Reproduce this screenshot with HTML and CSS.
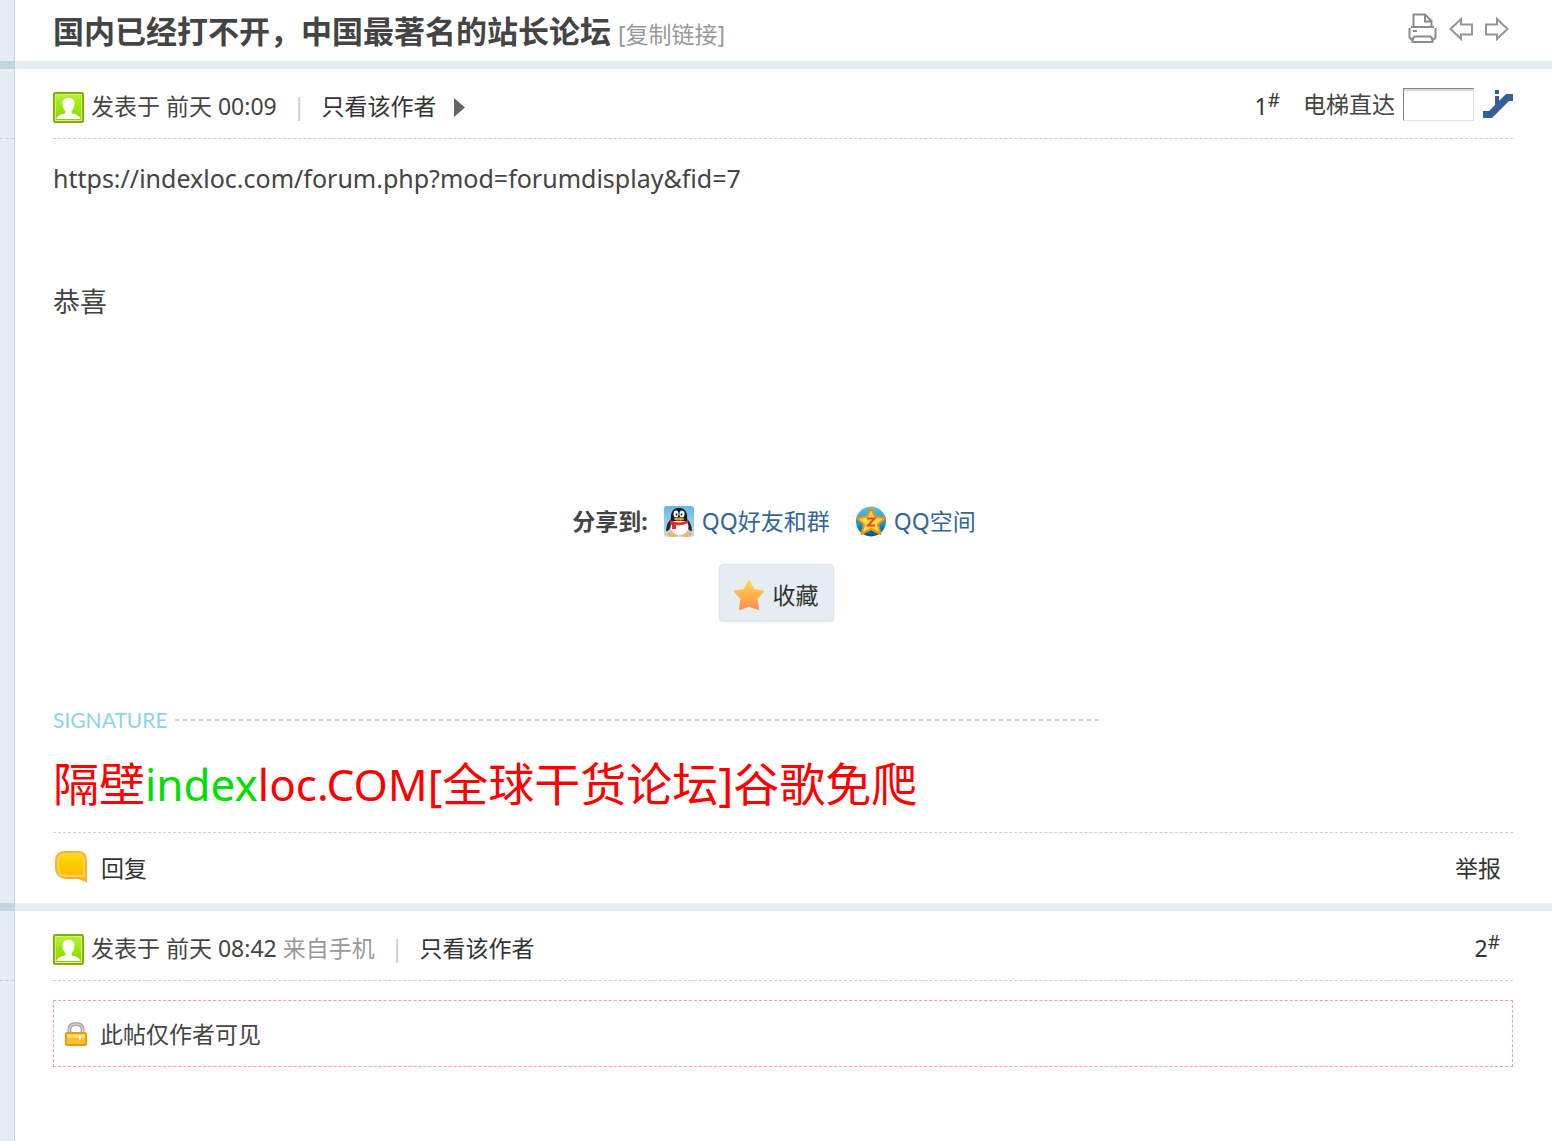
FILE: index.html
```
<!DOCTYPE html>
<html lang="zh-CN">
<head>
  <meta charset="utf-8">
  <title>国内已经打不开，中国最著名的站长论坛</title>
  <link rel="stylesheet" href="styles.css">
</head>
<body>
  <svg width="0" height="0" class="defs" aria-hidden="true">
    <defs>
      <linearGradient id="green" x1="0" y1="0" x2="0" y2="1"><stop offset="0" stop-color="#b9f03e"/><stop offset=".55" stop-color="#96e800"/><stop offset="1" stop-color="#8fc90c"/></linearGradient>
      <linearGradient id="orange" x1="0" y1="0" x2="0" y2="1"><stop offset="0" stop-color="#ffd84a"/><stop offset="1" stop-color="#ff8f52"/></linearGradient>
      <linearGradient id="yellow" x1="0" y1="0" x2="0" y2="1"><stop offset="0" stop-color="#ffdc00"/><stop offset="1" stop-color="#ffb400"/></linearGradient>
      <linearGradient id="sky" x1="0" y1="0" x2="0" y2="1"><stop offset="0" stop-color="#62b9e8"/><stop offset="1" stop-color="#c3e0e4"/></linearGradient>
      <linearGradient id="sea" x1="0" y1="0" x2="0" y2="1"><stop offset="0" stop-color="#5fc4e4"/><stop offset=".6" stop-color="#1592c4"/><stop offset="1" stop-color="#064b80"/></linearGradient>
      <symbol id="user" viewBox="0 0 31 31">
        <rect x="1" y="1" width="29" height="29" rx="1" fill="url(#green)" stroke="#82b008" stroke-width="2"/>
        <rect x="2.5" y="2.5" width="26" height="26" fill="none" stroke="#d4f57c"/>
        <path d="M3.500 27C4 24 7 22.500 12 21.500L12.500 19.500C10 17 9.500 14 9.500 11C9.500 4 21.500 4 21.500 11C21.500 14 21 17 18.500 19.500L19 21.500C24 22.500 27 24 27.500 27Z" fill="#fff"/>
      </symbol>
    </defs>
  </svg>

  <main class="thread">
    <header class="row">
      <div class="side"></div>
      <div class="title">
        <h1>国内已经打不开，中国最著名的站长论坛</h1>
        <a href="#" class="copy">[复制链接]</a>
        <div class="tools">
          <a href="#" aria-label="打印">
            <svg width="29" height="31" viewBox="0 0 29 31" fill="none" stroke="#8b8b8b" stroke-width="2">
              <path d="M5.500 13V1.500H17L23.500 8V13M17 2V8.500H23M1.500 15V24.500L4 27M3 14H26M27.500 15V24.500L25 27M6 23.500H23M6 23.500L4.500 27V29H24.500V27L23 23.500M5 18H9"/>
            </svg>
          </a>
          <a href="#" aria-label="上一主题">
            <svg width="24" height="24" viewBox="0 0 24 24" fill="none" stroke="#949494" stroke-width="2"><path d="M1.500 12L12 2V7.500H23V17.500H12V22Z"/></svg>
          </a>
          <a href="#" aria-label="下一主题">
            <svg width="24" height="24" viewBox="0 0 24 24" fill="none" stroke="#949494" stroke-width="2"><path d="M22.500 12L12 2V7.500H1V17.500H12V22Z"/></svg>
          </a>
        </div>
      </div>
    </header>
    <div class="bar"></div>

    <article class="row">
      <div class="side"><div class="side-line"></div></div>
      <div class="post">
        <div class="post-head">
          <svg class="user" width="31" height="31"><use href="#user"/></svg>
          <span class="date">发表于 前天 00:09</span>
          <span class="pipe">|</span>
          <a href="#">只看该作者</a>
          <svg class="arrow" width="11" height="19" viewBox="0 0 11 19"><path d="M0 0L11 9.500L0 19Z" fill="#666"/></svg>
          <a href="#" class="floor">1<sup>#</sup></a>
          <div class="lift">
            <label for="lift">电梯直达</label>
            <input type="text" id="lift">
            <button type="button" aria-label="跳转">
              <svg width="30" height="29" viewBox="0 0 30 29" fill="#336099"><path d="M0 21H6L23 4H30V11H26L9 28H0Z"/><path d="M12 0H16V4H12ZM12 6H16V13L12 17Z"/></svg>
            </button>
          </div>
        </div>
        <div class="message">
          <span class="url">https://indexloc.com/forum.php?mod=forumdisplay&amp;fid=7</span><br>
          <br>
          <br>
          恭喜
        </div>
        <div class="share">
          <strong>分享到:</strong>
          <a href="#">
            <svg width="30" height="31" viewBox="0 0 30 31">
              <rect width="30" height="31" rx="3" fill="url(#sky)"/>
              <ellipse cx="9" cy="28" rx="6" ry="3" fill="#f0b469"/><ellipse cx="22" cy="28" rx="6" ry="3" fill="#f0b469"/>
              <path d="M8 12Q2 17 2 25Q4 26 7 21H23Q26 26 28 25Q28 17 22 12Z" fill="#252831"/>
              <ellipse cx="15.500" cy="21" rx="9" ry="8" fill="#fff"/>
              <path d="M7 15C6 6 9 2 15 2S24 6 23 15Z" fill="#17191f"/>
              <ellipse cx="12" cy="8" rx="2.500" ry="3.500" fill="#fff"/><ellipse cx="18" cy="8" rx="2.500" ry="3.500" fill="#fff"/>
              <circle cx="12.500" cy="8.500" r="1" fill="#111"/><circle cx="17.500" cy="8.500" r="1" fill="#111"/>
              <ellipse cx="15" cy="13" rx="5" ry="1.500" fill="#e99b24"/>
              <path d="M6 14Q15 19 24 14V17Q18 20 12 19V23H8V19L6 18Z" fill="#e02a2a"/>
            </svg>
            QQ好友和群
          </a>
          <a href="#">
            <svg width="30" height="31" viewBox="0 0 30 31">
              <circle cx="15" cy="15.500" r="15" fill="url(#sea)"/>
              <path d="M15 2L19 10.500L29 12L22 18.500L24.500 28L15 23L5.500 28L8 18.500L1 12L11 10.500Z" fill="#ffd84d" stroke="#ee9217" stroke-width="2" stroke-linejoin="round"/>
              <path d="M11 12.500H18.500L12 19.500H19" fill="none" stroke="#e64b17" stroke-width="2"/>
            </svg>
            QQ空间
          </a>
        </div>
        <button type="button" class="fav">
          <svg width="32" height="32" viewBox="0 0 32 32"><path d="M16 2L20.500 11L30 12.500L23.500 19.500L25 30L16 26.500L7 30L8.500 19.500L2 12.500L11.500 11Z" fill="url(#orange)" stroke="url(#orange)" stroke-width="2" stroke-linejoin="round"/></svg>
          收藏
        </button>
        <div class="sign-head"><span>SIGNATURE</span><i></i></div>
        <div class="sign">隔壁<span class="latin"><span class="index">index</span>loc.COM[</span>全球干货论坛]谷歌免爬</div>
        <div class="post-foot">
          <a href="#">
            <svg width="34" height="32" viewBox="0 0 34 32"><path d="M11 1H24Q32 1 32 9V30L25 27H12Q2 26 2 16V10Q2 1 11 1Z" fill="url(#yellow)" stroke="#ffae35" stroke-width="2"/><path d="M12 3H23Q30 3 30 11V25H13Q4 25 4 16V11Q4 3 12 3Z" fill="none" stroke="#ffd257" stroke-width="2"/></svg>
            回复
          </a>
          <a href="#">举报</a>
        </div>
      </div>
    </article>
    <div class="bar"></div>

    <article class="row last">
      <div class="side"><div class="side-line"></div></div>
      <div class="post">
        <div class="post-head">
          <svg class="user" width="31" height="31"><use href="#user"/></svg>
          <span class="date">发表于 前天 08:42 <span class="from">来自手机</span></span>
          <span class="pipe">|</span>
          <a href="#">只看该作者</a>
          <a href="#" class="floor end">2<sup>#</sup></a>
        </div>
        <div class="locked">
          <svg width="22" height="24" viewBox="0 0 22 24">
            <path d="M4.500 12V7Q4.500 2 11 2T17.500 7V12" fill="none" stroke="#aaa" stroke-width="4"/>
            <path d="M4.500 12V7Q4.500 2 11 2T17.500 7V12" fill="none" stroke="#ddd" stroke-width="1"/>
            <rect x="1" y="11" width="20" height="12" rx="1" fill="#ffc02a" stroke="#e99a16" stroke-width="2"/>
            <path d="M2 14H20" stroke="#ffe07a" stroke-width="3"/><path d="M14 14H16V18H14Z" fill="#fff"/>
          </svg>
          此帖仅作者可见
        </div>
      </div>
    </article>
  </main>
</body>
</html>
```
FILE: styles.css
```
* {
  box-sizing: border-box;
}
body {
  margin: 0;
  background: #fff;
  color: #444;
  font: 23px/32px "Noto Sans", "Noto Sans CJK SC", sans-serif;
}
a {
  color: #333;
  text-decoration: none;
}
svg {
  display: block;
  flex: none;
}
.defs {
  position: absolute;
}
.thread {
  display: flex;
  flex-direction: column;
  min-height: 100vh;
}
.row {
  display: grid;
  grid-template-columns: 15px 1fr;
}
.last {
  flex: 1;
}
.side {
  background: #e5edf2;
  border-right: 1px solid #c2d5e3;
}
.side-line {
  height: 70px;
  border-bottom: 1px dashed #cdcdcd;
}
.bar {
  height: 8px;
  background: linear-gradient(to right, #c2d5e3 15px, #e5edf2 15px);
}
.title, .post {
  padding: 0 39px 0 38px;
}
.title {
  display: flex;
  align-items: baseline;
  height: 61px;
  padding-top: 9px;
}
h1 {
  margin: 0 7px 0 0;
  font-size: 31px;
  line-height: 44px;
}
.copy, .from {
  color: #999;
}
.tools {
  display: flex;
  align-items: center;
  align-self: flex-start;
  gap: 12px;
  margin: 4px 4px 0 auto;
}
.post-head {
  display: flex;
  align-items: center;
  height: 70px;
  padding-top: 4px;
  border-bottom: 1px dashed #cdcdcd;
}
.user {
  margin: 3px 7px 0 0;
}
.pipe {
  margin: 0 16px;
  color: #ccc;
}
.arrow {
  margin: 4px 0 0 18px;
}
.floor {
  margin: 0 23px 0 auto;
}
.floor.end {
  margin-right: 13px;
}
sup {
  font-size: 19px;
  line-height: 0;
  vertical-align: 8px;
}
.lift {
  display: flex;
  align-items: center;
  padding-bottom: 3px;
}
.lift input {
  width: 71px;
  height: 33px;
  margin: 0 9px 0 8px;
  padding: 2px 4px;
  border: 1px solid;
  border-color: #848484 #e0e0e0 #e0e0e0 #848484;
  background: linear-gradient(#d8d8d8 2px, #fff 2px);
  font: inherit;
}
.lift button {
  padding: 0;
  border: 0;
  background: none;
}
.message {
  min-height: 366px;
  padding-top: 18px;
  font-size: 27px;
  line-height: 41px;
}
.url {
  font-size: 25px;
}
.share {
  display: flex;
  justify-content: center;
  gap: 26px;
  margin-bottom: 27px;
  padding-right: 18px;
}
.share strong {
  margin-right: -10px;
}
.share a {
  display: flex;
  align-items: center;
  gap: 8px;
  color: #369;
}
.fav {
  display: flex;
  align-items: center;
  gap: 8px;
  width: 115px;
  height: 57px;
  margin: 0 auto 87px;
  padding: 4px 13px 0;
  border: 1px solid #dae6ec;
  border-radius: 4px;
  background: #e5edf2;
  box-shadow: 0 1px 2px #dde5ea;
  color: #333;
  font: inherit;
  white-space: nowrap;
  translate: -7px 0;
}
.sign-head {
  display: flex;
  align-items: center;
  gap: 7px;
  max-width: 1047px;
  height: 24px;
  color: #8dd3e7;
  font: 21px/24px Lato, sans-serif;
}
.sign-head i {
  flex: 1;
  height: 2px;
  background: repeating-linear-gradient(to right, #d2d2d2 0 4px, #fff 4px 8px);
}
.sign {
  margin: 21px 0 18px;
  color: #f00;
  font-size: 46px;
  line-height: 60px;
}
.latin {
  font-size: 44px;
}
.index {
  color: #00e000;
}
.post-foot {
  display: flex;
  justify-content: space-between;
  align-items: center;
  height: 71px;
  padding: 0 12px 0 1px;
  border-top: 1px dashed #cdcdcd;
}
.post-foot svg {
  margin-bottom: 3px;
}
.post-foot a {
  display: flex;
  align-items: center;
  gap: 13px;
}
.locked {
  display: flex;
  align-items: center;
  gap: 13px;
  height: 67px;
  margin-top: 19px;
  padding: 0 11px;
  border: 1px dashed #ff9a9a;
}
```
